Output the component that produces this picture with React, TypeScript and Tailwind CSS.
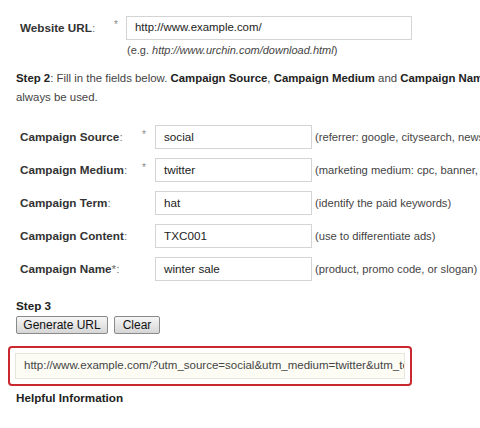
import React from "react";

const font = { fontFamily: '"Liberation Sans", Arial, sans-serif' };

function Row({ label, req, value, hint, starInLabel }: { label: string; req?: boolean; value: string; hint: string; starInLabel?: boolean }) {
  return (
    <div className="flex items-center h-[24px] mb-[9px]">
      <div className="w-[122px] shrink-0 text-[11.7px] text-[#333] flex items-center">
        <b>{label}</b>
        {starInLabel ? <span className="text-[#666]">*</span> : null}
        <span className="text-[#777]">:</span>
      </div>
      <div className="w-[13px] shrink-0 text-[10px] text-[#888] self-start mt-[2px]">{req ? "*" : ""}</div>
      <div className="w-[157px] h-[24px] shrink-0 border border-[#d4d4d4] bg-white flex items-center pl-[8px] text-[11.7px] text-[#222]">
        {value}
      </div>
      <div className="ml-[3px] whitespace-nowrap text-[11.2px] text-[#444]">{hint}</div>
    </div>
  );
}

export default function App() {
  return (
    <div className="w-[480px] h-[428px] overflow-hidden bg-white text-[#333]" style={font}>
      <div className="pt-[16px]">
        <div className="flex h-[24px] items-center pl-[20px]">
          <div className="w-[94px] shrink-0 text-[11.7px] text-[#333] self-start mt-[3px]">
            <b>Website URL</b>
            <span className="text-[#777]">:</span>
          </div>
          <div className="w-[12px] shrink-0 text-[10px] text-[#888] self-start mt-[1px]">*</div>
          <div className="w-[286px] h-[24px] border border-[#d4d4d4] bg-white flex items-center pl-[8px] text-[11.4px] text-[#222]">
            http://www.example.com/
          </div>
        </div>
        <div className="pl-[127px] mt-[3px] text-[11px] text-[#444] leading-[15px]">
          (e.g. <i>http://www.urchin.com/download.html</i>)
        </div>
        <div className="pl-[16px] mt-[11px] text-[11.4px] text-[#444] leading-[19px] whitespace-nowrap">
          <b className="text-[#222]">Step 2</b>: Fill in the fields below. <b className="text-[#222]">Campaign Source</b>, <b className="text-[#222]">Campaign Medium</b> and <b className="text-[#222]">Campaign Name</b> should
          <br />
          always be used.
        </div>
        <div className="pl-[20px] mt-[18px]">
          <Row label="Campaign Source" req value="social" hint="(referrer: google, citysearch, newsletter4)" />
          <Row label="Campaign Medium" req value="twitter" hint="(marketing medium: cpc, banner, email)" />
          <Row label="Campaign Term" value="hat" hint="(identify the paid keywords)" />
          <Row label="Campaign Content" value="TXC001" hint="(use to differentiate ads)" />
          <Row label="Campaign Name" starInLabel value="winter sale" hint="(product, promo code, or slogan)" />
        </div>
        <div className="pl-[16px] mt-[17px] text-[11.7px] font-bold text-[#222] leading-[16px]">Step 3</div>
        <div className="pl-[16px] mt-[2px] flex gap-[6px]">
          <button className="h-[18px] w-[92px] text-[12px] leading-none text-[#111] border border-[#8a8a8a] rounded-[2px] bg-gradient-to-b from-[#f6f6f6] to-[#d6d6d6]">
            Generate URL
          </button>
          <button className="h-[18px] w-[46px] text-[12px] leading-none text-[#111] border border-[#8a8a8a] rounded-[2px] bg-gradient-to-b from-[#f6f6f6] to-[#d6d6d6]">
            Clear
          </button>
        </div>
        <div className="ml-[8px] mt-[12px] w-[404px] h-[40px] border-2 border-[#c8282e] rounded-[4px] p-[5px]">
          <div className="h-full border border-[#e6e6da] bg-[#fcfcf4] flex items-center pl-[8px] overflow-hidden whitespace-nowrap text-[11.5px] text-[#444]">
            http://www.example.com/?utm_source=social&amp;utm_medium=twitter&amp;utm_term=hat
          </div>
        </div>
        <div className="pl-[16px] mt-[4px] text-[11.7px] font-bold text-[#222] leading-[16px]">Helpful Information</div>
      </div>
    </div>
  );
}
